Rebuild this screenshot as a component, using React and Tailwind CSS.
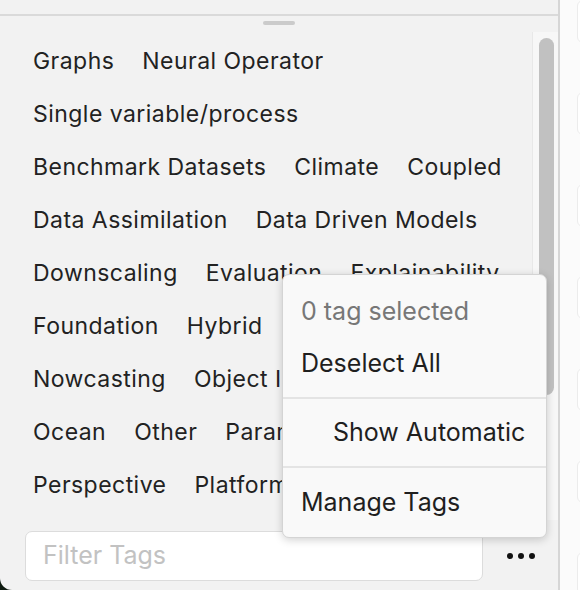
import React from 'react';

const TAG_ROWS = [
  ['Graphs', 'Neural Operator'],
  ['Single variable/process'],
  ['Benchmark Datasets', 'Climate', 'Coupled'],
  ['Data Assimilation', 'Data Driven Models'],
  ['Downscaling', 'Evaluation', 'Explainability'],
  ['Foundation', 'Hybrid', 'Interpretability'],
  ['Nowcasting', 'Object Identification'],
  ['Ocean', 'Other', 'Parameterization'],
  ['Perspective', 'Platform'],
];

const font = { fontFamily: 'Inter, "Noto Sans", sans-serif' };

const TagMenu = () => (
  <div className="absolute left-[282px] top-[274px] w-[265px] h-[264px] rounded-[7px] border border-[#d4d4d4] bg-[#f9f9f9] shadow-[0_2px_8px_rgba(0,0,0,0.18)] text-[25px] text-[#1f1f1f] flex flex-col">
    <div className="pt-[11px] pb-[7px] border-b-2 border-[#e4e4e4]">
      <div className="h-[52px] flex items-center pl-[18px] text-[#777]">0 tag selected</div>
      <div className="h-[52px] flex items-center pl-[18px]">Deselect All</div>
    </div>
    <div className="h-[70px] flex items-center pl-[50px] border-b-2 border-[#e4e4e4]">Show Automatic</div>
    <div className="h-[70px] flex items-center pl-[18px]">Manage Tags</div>
  </div>
);

export default function App() {
  return (
    <div className="w-[580px] h-[590px] bg-[#0e1a10] flex overflow-hidden relative" style={font}>
      {/* Tag panel */}
      <div className="w-[560px] shrink-0 h-full bg-[#f2f2f2] border-r-2 border-[#d6d6d6] rounded-bl-[12px] flex flex-col">
        <div className="h-[16px] border-b-2 border-[#dadada] shrink-0" />
        <div className="h-[16px] flex justify-center items-center shrink-0">
          <div className="w-[32px] h-[4px] rounded-full bg-[#cbcbcb] -mt-[2px]" />
        </div>
        <div className="flex h-[488px] shrink-0">
          <div className="flex-1 pt-[3px] pl-[19px] overflow-hidden">
            {TAG_ROWS.map((row, i) => (
              <div key={i} className="h-[53px] flex items-center whitespace-nowrap">
                {row.map((t) => (
                  <span key={t} className="px-[14px] text-[23px] text-[#222] tracking-[0.02em]">{t}</span>
                ))}
              </div>
            ))}
          </div>
          <div className="w-[26px] bg-[#f7f7f7] border-l border-[#e8e8e8] pl-[6px] pt-[6px]">
            <div className="w-[15px] h-[357px] rounded-full bg-[#c1c1c1]" />
          </div>
        </div>
        <div className="flex items-start pt-[11px] pl-[25px]">
          <div className="w-[458px] h-[50px] shrink-0 bg-white border border-[#dcdcdc] rounded-[7px] flex items-center pl-[17px] text-[25px] text-[#c2c2c2]">
            Filter Tags
          </div>
          <div className="flex-1 h-[50px] flex items-center justify-center gap-[5px]">
            <span className="w-[6px] h-[6px] rounded-full bg-[#111]" />
            <span className="w-[6px] h-[6px] rounded-full bg-[#111]" />
            <span className="w-[6px] h-[6px] rounded-full bg-[#111]" />
          </div>
        </div>
      </div>
      {/* Right column with card edges */}
      <div className="flex-1 h-full bg-[#fbfbfb] flex flex-col gap-[49px] pl-[17px]">
        {[0, 1, 2, 3, 4, 5, 6].map((i) => (
          <div key={i} className="h-[43px] w-[20px] shrink-0 bg-white border border-[#ececec] rounded-[6px]" />
        ))}
      </div>
      <TagMenu />
    </div>
  );
}
